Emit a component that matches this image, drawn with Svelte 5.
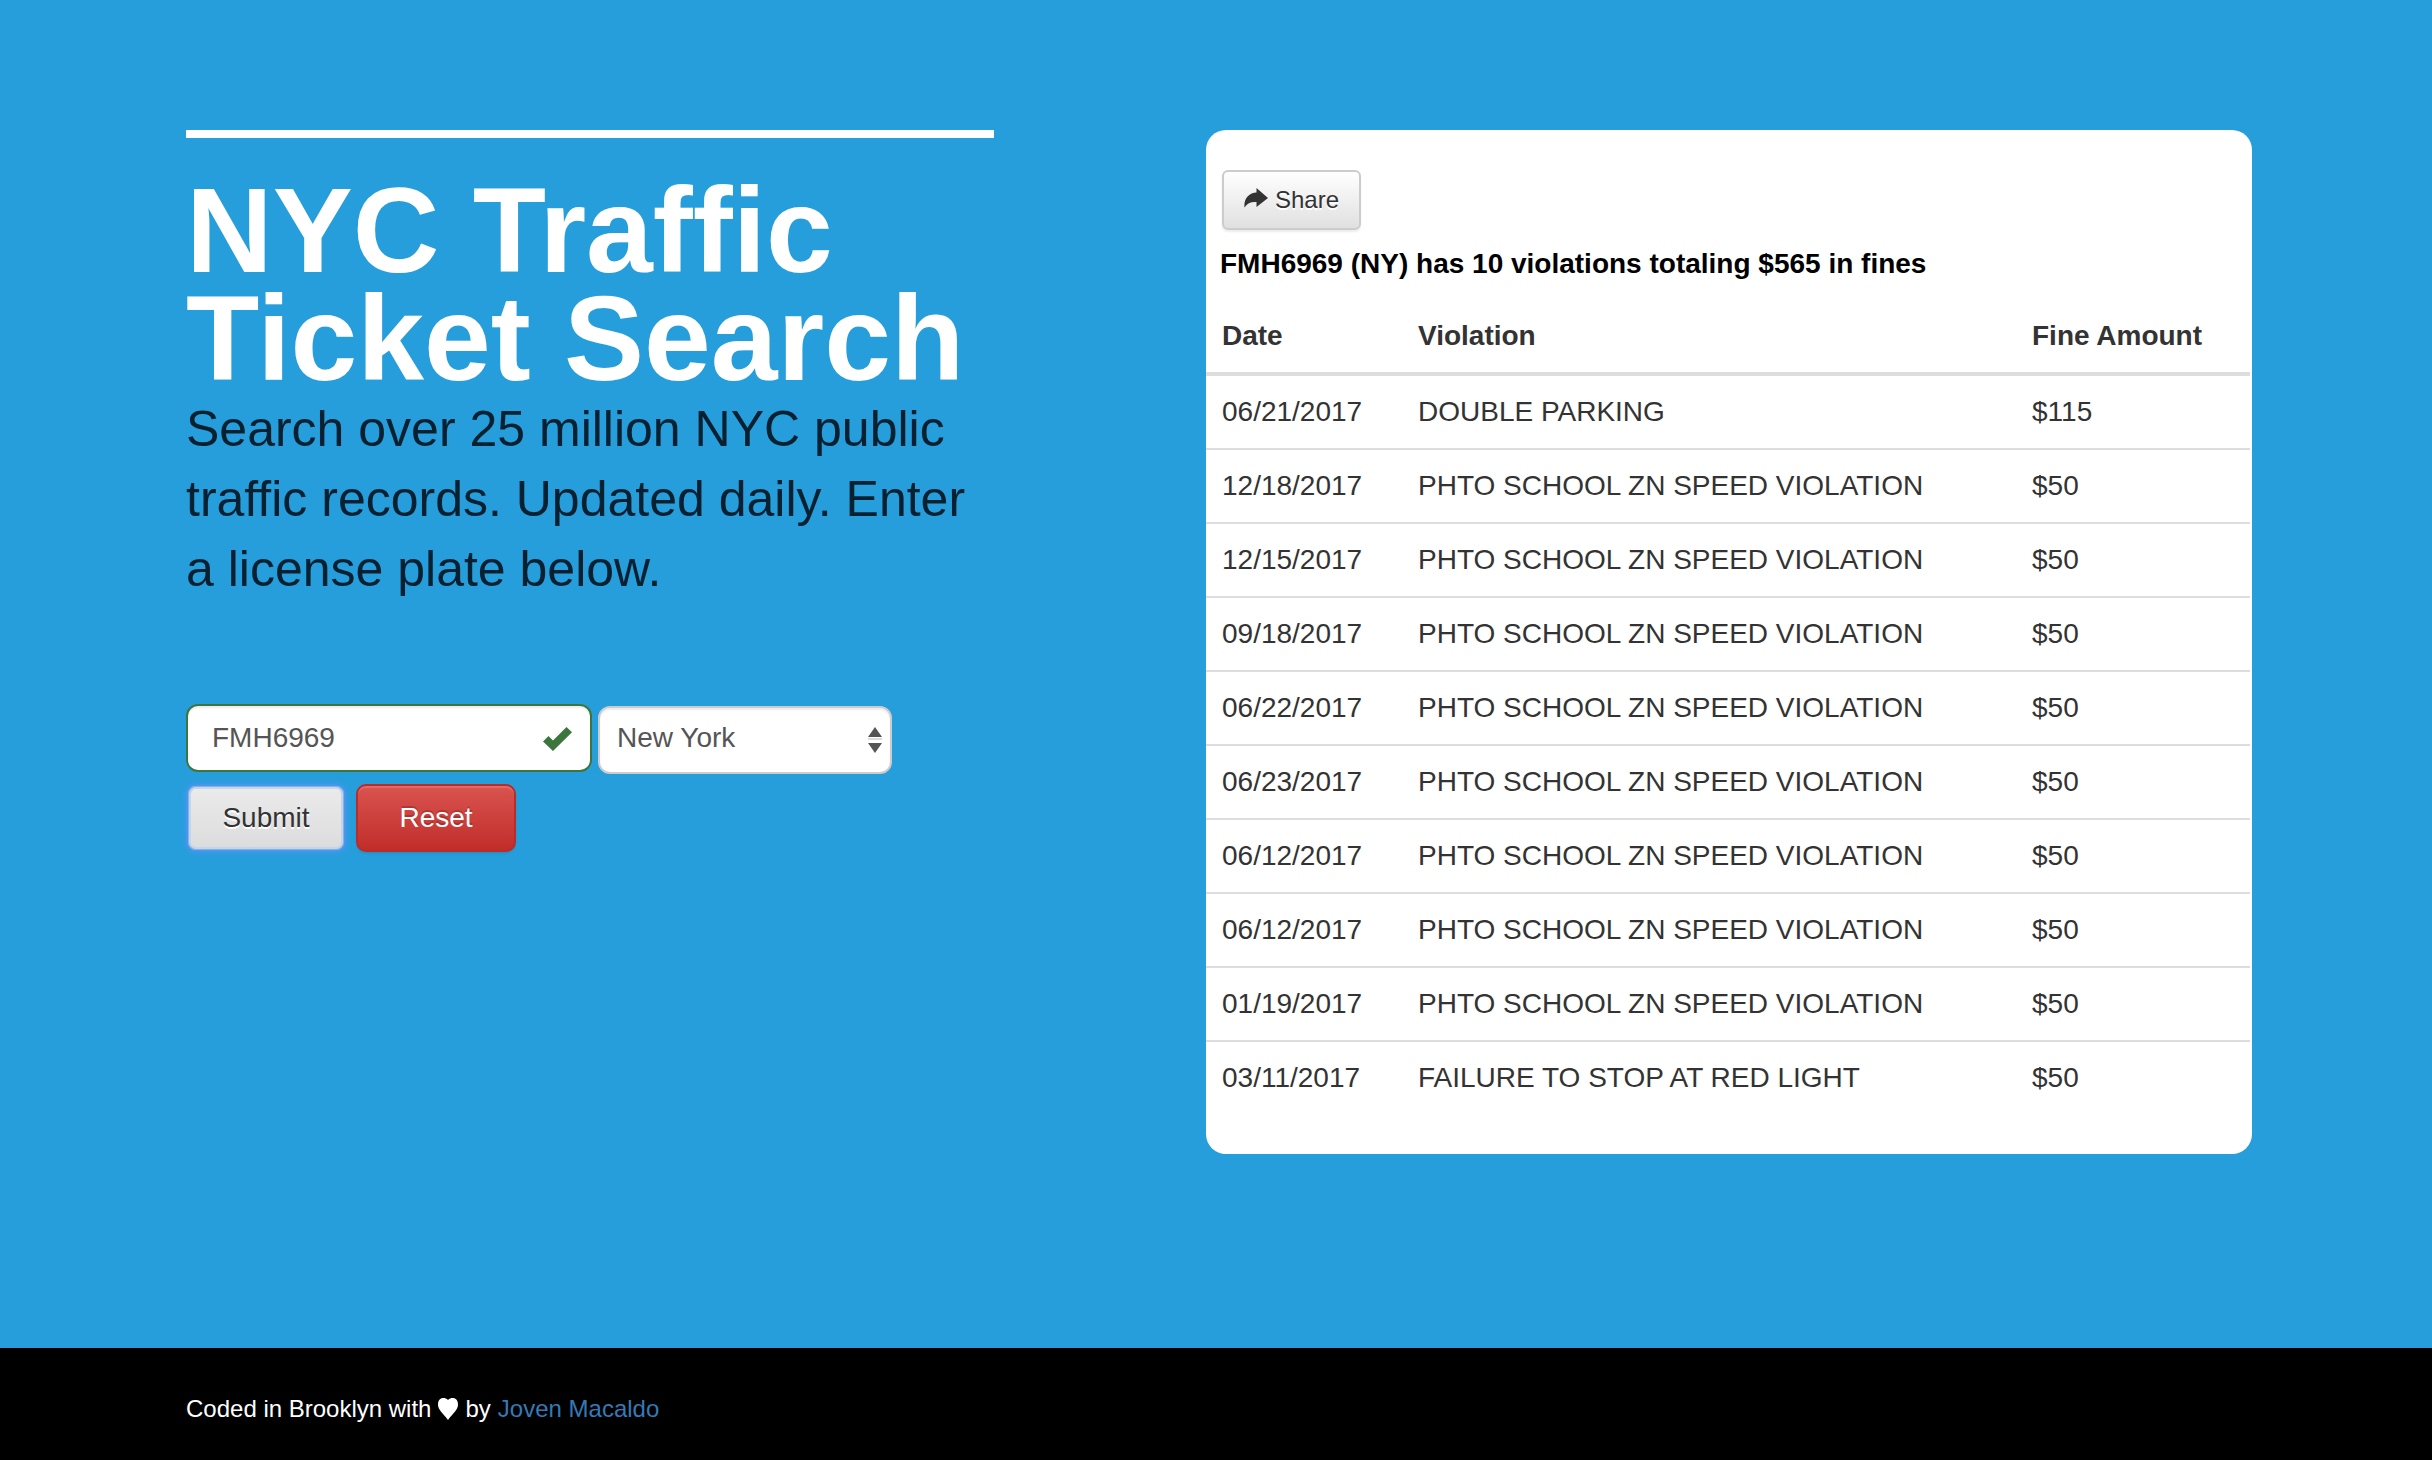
<script>
  let plate = $state('FMH6969');
  let region = $state('New York');

  const speed = 'PHTO SCHOOL ZN SPEED VIOLATION';
  const tickets = [
    { date: '06/21/2017', violation: 'DOUBLE PARKING', fine: 115 },
    { date: '12/18/2017', violation: speed, fine: 50 },
    { date: '12/15/2017', violation: speed, fine: 50 },
    { date: '09/18/2017', violation: speed, fine: 50 },
    { date: '06/22/2017', violation: speed, fine: 50 },
    { date: '06/23/2017', violation: speed, fine: 50 },
    { date: '06/12/2017', violation: speed, fine: 50 },
    { date: '06/12/2017', violation: speed, fine: 50 },
    { date: '01/19/2017', violation: speed, fine: 50 },
    { date: '03/11/2017', violation: 'FAILURE TO STOP AT RED LIGHT', fine: 50 }
  ];
  const total = tickets.reduce((sum, t) => sum + t.fine, 0);
</script>

<div class="page">
  <main>
    <section class="intro">
      <h1>NYC Traffic Ticket Search</h1>
      <p class="lead">Search over 25 million NYC public traffic records. Updated daily. Enter a license plate below.</p>

      <form onsubmit={(e) => e.preventDefault()}>
        <div class="fields">
          <div class="plate">
            <input type="text" aria-label="License plate" bind:value={plate} />
            <svg class="check" viewBox="0 0 29 24" aria-hidden="true">
              <path d="M0 14.5 5.5 9 10 13.5 23.5 0 29 5.200 10 24Z" />
            </svg>
          </div>
          <div class="region">
            <select aria-label="State" bind:value={region}>
              <option>New York</option>
              <option>New Jersey</option>
              <option>Connecticut</option>
            </select>
            <svg class="arrows" viewBox="0 0 14 26" aria-hidden="true">
              <path d="M0 10 7 0 14 10ZM0 16H14L7 26Z" />
              <path class="rule" d="M0 12H14" />
            </svg>
          </div>
        </div>
        <div class="actions">
          <button class="submit" type="submit">Submit</button>
          <button class="reset" type="button">Reset</button>
        </div>
      </form>
    </section>

    <section class="results">
      <button class="share" type="button">
        <svg viewBox="0 0 24 20" aria-hidden="true">
          <path d="M12.500 0 24 10 12.500 19V14C7 13.500 3.500 15.200 0.500 19.500 -0.500 10.500 5 5 12.500 4.500Z" />
        </svg>
        <span>Share</span>
      </button>
      <p class="summary">FMH6969 (NY) has {tickets.length} violations totaling ${total} in fines</p>
      <table>
        <thead>
          <tr>
            <th class="date" scope="col">Date</th>
            <th scope="col">Violation</th>
            <th class="fine" scope="col">Fine Amount</th>
          </tr>
        </thead>
        <tbody>
          {#each tickets as t}
            <tr>
              <td>{t.date}</td>
              <td>{t.violation}</td>
              <td>${t.fine}</td>
            </tr>
          {/each}
        </tbody>
      </table>
    </section>
  </main>

  <footer>
    <p>
      <span>Coded in Brooklyn with</span>
      <svg viewBox="0 0 20 22" role="img" aria-label="love">
        <path d="M10 2C11.500 0.500 13 0 14.500 0 18 0 20 2.500 20 6.500 20 12 15 15 10 22 5 15 0 12 0 6.500 0 2.500 2 0 5.500 0 7 0 8.500 0.500 10 2Z" />
      </svg>
      <span>by</span>
      <a href="#joven">Joven Macaldo</a>
    </p>
  </footer>
</div>

<style>
  :global(body) {
    margin: 0;
    background: #269edb;
  }

  .page {
    display: flex;
    flex-direction: column;
    min-height: 100vh;
    font: 28px/40px 'Liberation Sans', Arial, sans-serif;
    color: #333;
  }

  .page * {
    box-sizing: border-box;
  }

  main {
    flex: 1;
    display: grid;
    grid-template-columns: 808fr 1046fr;
    column-gap: 212px;
    align-items: start;
    padding: 130px 180px 130px 186px;
  }

  .intro {
    border-top: 8px solid #fff;
    padding-top: 38px;
  }

  h1 {
    margin: 0;
    font-size: 120px;
    line-height: 108px;
    color: #fff;
  }

  .lead {
    margin: 2px 0 100px;
    font-size: 50px;
    line-height: 70px;
    color: #082030;
  }

  button,
  input,
  select {
    font: inherit;
  }

  .fields {
    display: flex;
    align-items: flex-start;
    gap: 6px;
  }

  .plate,
  .region {
    position: relative;
  }

  .plate {
    width: 406px;
  }

  .region {
    width: 294px;
    padding-top: 2px;
  }

  input,
  select {
    display: block;
    width: 100%;
    height: 68px;
    border: 2px solid #3c763d;
    border-radius: 12px;
    background: #fff;
    color: #555;
    box-shadow: inset 0 2px 2px rgba(0, 0, 0, 0.075);
  }

  input {
    padding: 0 64px 0 24px;
  }

  select {
    appearance: none;
    padding: 0 40px 4px 17px;
    border-color: #ccc;
  }

  .check {
    position: absolute;
    top: 23px;
    right: 20px;
    width: 29px;
    height: 24px;
    fill: #3c763d;
  }

  .arrows {
    position: absolute;
    top: 23px;
    right: 10px;
    width: 14px;
    height: 26px;
    fill: #555;
    pointer-events: none;
  }

  .rule {
    stroke: #ddd;
    stroke-width: 2px;
  }

  .actions {
    display: flex;
    gap: 10px;
    padding-top: 10px;
  }

  .actions button {
    min-width: 160px;
    height: 68px;
    border-radius: 10px;
  }

  .submit {
    border: 2px solid #4598ea;
    background: linear-gradient(#ebebeb, #dcdcdc);
    color: #333;
    text-shadow: 0 2px 0 #fff;
    box-shadow: inset 0 0 0 1px #8fb0d8, inset 0 0 0 3px #c0d5f0, 0 0 5px 1px #4496ee;
  }

  .reset {
    border: 2px solid #b92c28;
    background: linear-gradient(#d9534f, #c12e2a);
    color: #fff;
    text-shadow: 0 -2px 0 rgba(0, 0, 0, 0.2);
    box-shadow: inset 0 2px 0 rgba(255, 255, 255, 0.15), 0 2px 2px rgba(0, 0, 0, 0.075);
  }

  .results {
    padding: 40px 2px 40px 0;
    border-radius: 20px;
    background: #fff;
  }

  .share {
    display: flex;
    align-items: center;
    gap: 7px;
    height: 60px;
    margin-left: 16px;
    padding: 0 20px;
    border: 2px solid #ccc;
    border-radius: 6px;
    background: linear-gradient(#fff, #e0e0e0);
    color: #333;
    font-size: 24px;
    text-shadow: 0 2px 0 #fff;
    box-shadow: 0 2px 2px rgba(0, 0, 0, 0.075);
  }

  .share svg {
    width: 24px;
    height: 20px;
    margin-bottom: 4px;
    fill: #333;
  }

  .summary {
    margin: 14px 14px 16px;
    font-weight: bold;
    color: #000;
  }

  table {
    width: 100%;
    border-spacing: 0;
    table-layout: fixed;
  }

  th,
  td {
    padding: 16px;
    text-align: left;
  }

  th {
    border-bottom: 4px solid #ddd;
  }

  .date {
    width: 196px;
  }

  .fine {
    width: 234px;
  }

  tr + tr td {
    border-top: 2px solid #ddd;
  }

  footer {
    padding: 41px 186px 31px;
    background: #000;
    color: #fff;
    font-size: 24px;
  }

  footer p {
    display: flex;
    align-items: center;
    gap: 7px;
    margin: 0;
  }

  footer svg {
    width: 20px;
    height: 22px;
    fill: #fff;
  }

  footer a {
    color: #337ab7;
    text-decoration: none;
  }
</style>
